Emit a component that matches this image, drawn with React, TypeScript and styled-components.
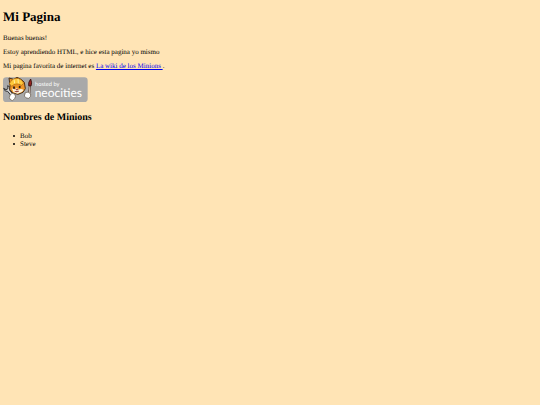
import React from "react";
import styled, { createGlobalStyle } from "styled-components";

const GlobalStyle = createGlobalStyle`
  body {
    margin: 0;
    background: #ffe4b5;
    color: #000;
    font: 7px/8px "Liberation Serif", "Times New Roman", serif;
    text-rendering: geometricPrecision;
  }
`;

const Page = styled.main`
  display: flex;
  flex-direction: column;
  align-items: flex-start;
  padding: 9px 3px;
`;

const Title = styled.h1`
  margin: 0 0 9px;
  font-size: 13px;
  line-height: 16px;
`;

const Paragraph = styled.p`
  margin: 0 0 6px;
`;

const WikiLink = styled.a`
  color: #0000ee;
  white-space: pre;
`;

const BadgeLink = styled.a`
  display: block;
  margin-top: 1px;
`;

const BadgeArt = styled.svg`
  display: block;
  width: 85px;
  height: 25px;
`;

const BadgeText = styled.text<{ $size: number }>`
  font-family: Lato, "Open Sans", sans-serif;
  font-size: ${({ $size }) => $size}px;
  fill: #fff;
`;

const Subtitle = styled.h2`
  margin: 10px 0 8px;
  font-size: 10px;
  line-height: 12px;
`;

const NameList = styled.ul`
  margin: 0;
  padding-left: 10px;
  list-style: none;
`;

const NameItem = styled.li`
  display: flex;
  align-items: center;
  gap: 5px;

  &::before {
    content: "";
    width: 2px;
    height: 2px;
    border-radius: 50%;
    background: currentColor;
  }
`;

const names = ["Bob", "Steve"];

function NeocitiesBadge() {
  return (
    <BadgeArt viewBox="10 13 255 75" role="img" aria-label="hosted by neocities">
      <rect x="10" y="14" width="254" height="74" rx="10" fill="#a9a9a9" />
      {/* wrench */}
      <path d="M12 47l5 8 7 1 12 15 6-5-12-13 1-9-7-5 1 9-6 3z" fill="#d9d9d9" stroke="#333" strokeWidth="3" />
      {/* brush */}
      <path d="M84 72l5-34 4 1-3 34z" fill="#e9dcc6" stroke="#4a302a" strokeWidth="2" />
      <path d="M87 39q-2-10 6-20 5 12 1 21z" fill="#9b2420" stroke="#401512" strokeWidth="3" />
      {/* head */}
      <path d="M31 38l-3-22 14 4 10-6 14 7 8 8 3 19-7 11-15 6-16-4-9-11z" fill="#ee9526" stroke="#4b321b" strokeWidth="3" />
      <path d="M37 48q5-2 9 3l5-6 6 6q7-5 15 1l-6 6-13 5-12-5z" fill="#fff4dc" />
      <path d="M29 33q5-14 20-16 17 0 23 15l-7 6q-16-10-29 3z" fill="#ffc83a" stroke="#a86313" strokeWidth="2" />
      <path d="M43 20l2 12m10-13l1 13" stroke="#fff0a0" strokeWidth="3" />
      <ellipse cx="43" cy="45" rx="3" ry="4" fill="#302018" />
      <ellipse cx="60" cy="43" rx="3" ry="4" fill="#302018" />
      <path d="M49 50h6l-3 3zM45 56q7 4 13-1" fill="#8d322a" stroke="#8d322a" strokeWidth="2" />
      {/* gloves */}
      <path d="M32 66q5-7 13-2 5 7 0 14l-7 6q-9-3-9-10z" fill="#fff" stroke="#5e5143" strokeWidth="2" />
      <path d="M77 60q9-5 16 4 2 8-6 13-9 1-13-7z" fill="#fff" stroke="#5e5143" strokeWidth="2" />
      <BadgeText x="106" y="41" $size={17}>hosted by</BadgeText>
      <BadgeText x="105" y="73" $size={36}>neocities</BadgeText>
    </BadgeArt>
  );
}

export default function App() {
  return (
    <>
      <GlobalStyle />
      <Page>
        <Title>Mi Pagina</Title>
        <Paragraph>Buenas buenas!</Paragraph>
        <Paragraph>Estoy aprendiendo HTML, e hice esta pagina yo mismo</Paragraph>
        <Paragraph>
          Mi pagina favorita de internet es <WikiLink href="#wiki">La wiki de los Minions </WikiLink>.
        </Paragraph>
        <BadgeLink href="#neocities">
          <NeocitiesBadge />
        </BadgeLink>
        <Subtitle>Nombres de Minions</Subtitle>
        <NameList>
          {names.map((name) => (
            <NameItem key={name}>{name}</NameItem>
          ))}
        </NameList>
      </Page>
    </>
  );
}
